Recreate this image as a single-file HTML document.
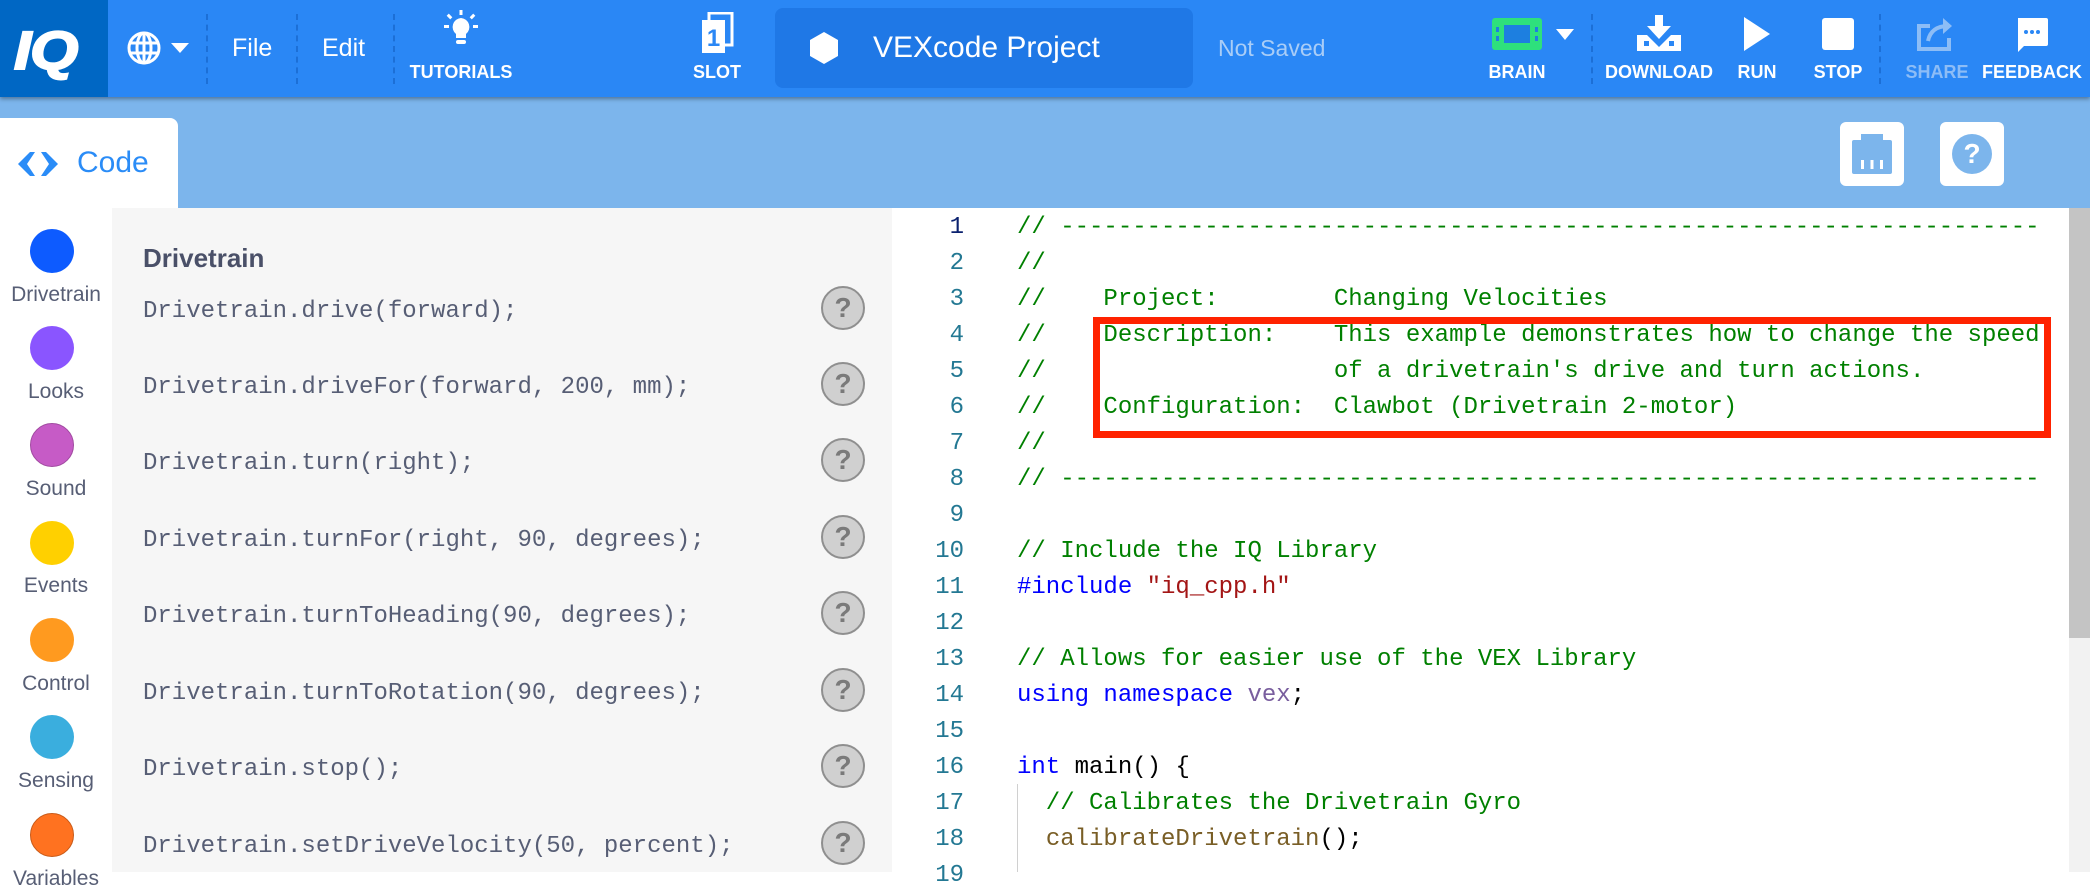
<!DOCTYPE html>
<html><head><meta charset="utf-8"><style>
*{margin:0;padding:0;box-sizing:border-box}
body{width:2090px;height:872px;overflow:hidden;background:#fff;font-family:"Liberation Sans",sans-serif;position:relative}
.a{position:absolute}
.hdr{left:0;top:0;width:2090px;height:97px;background:#2a87f5;box-shadow:0 2px 4px rgba(0,0,0,.35);z-index:2}
.lbl{position:absolute;color:#fff;font-weight:bold;font-size:18px;transform:translateX(-50%);top:62px;white-space:nowrap}
.sep{position:absolute;top:14px;height:70px;border-left:2px dashed #1c6fd6}
.bar2{left:0;top:97px;width:2090px;height:111px;background:#7cb5ec}
.mono{font-family:"Liberation Mono",monospace;font-size:24px;white-space:pre}
.cat{position:absolute;left:30px;width:44px;height:44px;border-radius:50%}
.cl{position:absolute;left:0;width:112px;text-align:center;font-size:21px;color:#575e75}
.pi{position:absolute;left:143px;color:#575e75}
.q{position:absolute;left:821px;width:44px;height:44px;border-radius:50%;background:#d0d0d0;border:2px solid #8f8f8f;color:#7a7a7a;font-weight:bold;font-size:28px;text-align:center;line-height:40px}
.ln{position:absolute;left:900px;width:64px;text-align:right;color:#237893;height:36px;line-height:36px}
.cd{position:absolute;left:1017px;height:36px;line-height:36px}
.c{color:#008000}.k{color:#0000ff}.s{color:#a31515}.p{color:#795e9e}.f{color:#795e26}
</style></head><body>
<div class="a hdr">
 <div class="a" style="left:0;top:0;width:108px;height:97px;background:#0067c4"></div>
 <div class="a" style="left:14px;top:20px;font-size:54px;font-weight:900;font-style:italic;color:#fff;letter-spacing:-1px;font-family:'Liberation Sans',sans-serif;transform:scaleX(1.15);transform-origin:left;-webkit-text-stroke:2px #fff">IQ</div>
 <svg class="a" style="left:126px;top:30px" width="36" height="36" viewBox="0 0 36 36" fill="none" stroke="#fff" stroke-width="3"><circle cx="18" cy="18" r="15"/><ellipse cx="18" cy="18" rx="7" ry="15"/><line x1="3" y1="13" x2="33" y2="13"/><line x1="3" y1="23" x2="33" y2="23"/><line x1="18" y1="3" x2="18" y2="33"/></svg>
 <div class="a" style="left:171px;top:43px;width:0;height:0;border-left:9px solid transparent;border-right:9px solid transparent;border-top:10px solid #fff"></div>
 <div class="sep" style="left:206px"></div><div class="sep" style="left:296px"></div><div class="sep" style="left:393px"></div>
 <div class="a" style="left:232px;top:34px;color:#fff;font-size:25px">File</div>
 <div class="a" style="left:322px;top:34px;color:#fff;font-size:25px">Edit</div>
 <svg class="a" style="left:443px;top:10px" width="36" height="40" viewBox="0 0 36 40" fill="#fff"><path d="M18 8a9 9 0 0 0-5 16v4h10v-4a9 9 0 0 0-5-16z"/><rect x="13" y="30" width="10" height="4" rx="2"/><rect x="16.5" y="0" width="3" height="5"/><rect x="1" y="15" width="5" height="3"/><rect x="30" y="15" width="5" height="3"/><rect x="5" y="4" width="3" height="5" transform="rotate(-45 6.5 6.5)"/><rect x="28" y="4" width="3" height="5" transform="rotate(45 29.5 6.5)"/></svg>
 <div class="lbl" style="left:461px">TUTORIALS</div>
 <svg class="a" style="left:700px;top:12px" width="34" height="42" viewBox="0 0 34 42"><rect x="9" y="1" width="23" height="32" fill="none" stroke="#fff" stroke-width="3"/><rect x="2" y="8" width="23" height="33" fill="#fff"/><text x="13.5" y="34" font-size="24" font-weight="bold" fill="#2a87f5" text-anchor="middle" font-family="Liberation Sans">1</text></svg>
 <div class="lbl" style="left:717px">SLOT</div>
 <div class="a" style="left:775px;top:8px;width:418px;height:80px;background:#1f78e6;border-radius:8px"></div>
 <svg class="a" style="left:810px;top:32px" width="28" height="32" viewBox="0 0 28 32"><path d="M14 0L28 8v16L14 32 0 24V8z" fill="#fff"/></svg>
 <div class="a" style="left:873px;top:31px;color:#fff;font-size:30px">VEXcode Project</div>
 <div class="a" style="left:1218px;top:35px;color:#a9cdf7;font-size:23px">Not Saved</div>
 <svg class="a" style="left:1492px;top:18px" width="50" height="32" viewBox="0 0 50 32"><rect width="50" height="32" rx="3" fill="#2ee07c"/><rect x="12" y="7" width="26" height="18" fill="#1d7fe0"/><rect x="4" y="9" width="3" height="5" fill="#1d7fe0"/><rect x="4" y="18" width="3" height="5" fill="#1d7fe0"/><rect x="43" y="9" width="3" height="5" fill="#1d7fe0"/><rect x="43" y="18" width="3" height="5" fill="#1d7fe0"/></svg>
 <div class="a" style="left:1556px;top:29px;width:0;height:0;border-left:9px solid transparent;border-right:9px solid transparent;border-top:11px solid #fff"></div>
 <div class="lbl" style="left:1517px">BRAIN</div>
 <div class="sep" style="left:1591px"></div>
 <svg class="a" style="left:1637px;top:15px" width="44" height="36" viewBox="0 0 44 36" fill="#fff"><rect x="18" y="0" width="8" height="12"/><path d="M10 11h24L22 24z"/><path d="M0 20h10l12 12 12-12h10v16H0z"/><rect x="7" y="26" width="5" height="5" fill="#2a87f5"/><rect x="32" y="26" width="5" height="5" fill="#2a87f5"/></svg>
 <div class="lbl" style="left:1659px">DOWNLOAD</div>
 <svg class="a" style="left:1744px;top:17px" width="28" height="34" viewBox="0 0 28 34"><path d="M0 0L26 17 0 34z" fill="#fff"/></svg>
 <div class="lbl" style="left:1757px">RUN</div>
 <div class="a" style="left:1822px;top:18px;width:32px;height:32px;background:#fff;border-radius:3px"></div>
 <div class="lbl" style="left:1838px">STOP</div>
 <div class="sep" style="left:1879px"></div>
 <svg class="a" style="left:1916px;top:14px" width="40" height="38" viewBox="0 0 40 38" fill="none" stroke="#8dbdf6" stroke-width="4"><path d="M14 12H3v23h30V24"/><path d="M12 27c2-10 9-15 20-15" /><path d="M27 4l9 8-9 8z" fill="#8dbdf6" stroke="none"/></svg>
 <div class="lbl" style="left:1937px;color:#8dbdf6">SHARE</div>
 <svg class="a" style="left:2016px;top:18px" width="32" height="34" viewBox="0 0 32 34"><path d="M2 0h28a2 2 0 0 1 2 2v24a2 2 0 0 1-2 2H8L2 34z" fill="#fff"/><circle cx="10" cy="14" r="2" fill="#2a87f5"/><circle cx="16" cy="14" r="2" fill="#2a87f5"/><circle cx="22" cy="14" r="2" fill="#2a87f5"/></svg>
 <div class="lbl" style="left:2032px">FEEDBACK</div>
</div>
<div class="a bar2"></div>
<div class="a" style="left:0;top:118px;width:178px;height:100px;background:#fff;border-radius:0 8px 0 0"></div>
<svg class="a" style="left:18px;top:152px" width="40" height="24" viewBox="0 0 40 24" fill="#2a8cf7"><path d="M0 12L12 0h5L9 12l8 12h-5z"/><path d="M40 12L28 0h-5l8 12-8 12h5z"/></svg>
<div class="a" style="left:77px;top:146px;color:#2a8cf7;font-size:30px">Code</div>
<div class="a" style="left:1840px;top:122px;width:64px;height:64px;background:#fff;border-radius:6px"></div>
<svg class="a" style="left:1852px;top:134px" width="40" height="40" viewBox="0 0 40 40" fill="#7cb5ec"><rect x="9" y="0" width="22" height="6"/><rect x="0" y="6" width="40" height="34" rx="2"/><rect x="9" y="26" width="3" height="9" fill="#fff"/><rect x="18.5" y="26" width="3" height="9" fill="#fff"/><rect x="28" y="26" width="3" height="9" fill="#fff"/></svg>
<div class="a" style="left:1940px;top:122px;width:64px;height:64px;background:#fff;border-radius:6px"></div>
<div class="a" style="left:1952px;top:134px;width:40px;height:40px;border-radius:50%;background:#7cb5ec;color:#fff;font-weight:bold;font-size:28px;text-align:center;line-height:40px">?</div>

<div class="a" style="left:112px;top:208px;width:780px;height:664px;background:#f6f6f6"></div>
<div class="a" style="left:2069px;top:208px;width:21px;height:430px;background:#c4c4c4"></div>
<div class="a" style="left:2069px;top:638px;width:21px;height:234px;background:#f2f2f2"></div>

<div class="cat" style="top:229px;background:#0d5bff"></div><div class="cl" style="top:283px">Drivetrain</div>
<div class="cat" style="top:326px;background:#8a55ff"></div><div class="cl" style="top:380px">Looks</div>
<div class="cat" style="top:423px;background:#c65bc6;border:1px solid #a04aa0"></div><div class="cl" style="top:477px">Sound</div>
<div class="cat" style="top:521px;background:#ffd000"></div><div class="cl" style="top:574px">Events</div>
<div class="cat" style="top:618px;background:#ff9a1f"></div><div class="cl" style="top:672px">Control</div>
<div class="cat" style="top:715px;background:#3aaede"></div><div class="cl" style="top:769px">Sensing</div>
<div class="cat" style="top:813px;background:#ff7220;border:1px solid #c85a18"></div><div class="cl" style="top:867px">Variables</div>

<div class="a" style="left:143px;top:243px;font-size:26px;font-weight:bold;color:#4a5068">Drivetrain</div>
<div class="pi mono" style="top:298px">Drivetrain.drive(forward);</div><div class="q" style="top:286px">?</div>
<div class="pi mono" style="top:374px">Drivetrain.driveFor(forward, 200, mm);</div><div class="q" style="top:362px">?</div>
<div class="pi mono" style="top:450px">Drivetrain.turn(right);</div><div class="q" style="top:438px">?</div>
<div class="pi mono" style="top:527px">Drivetrain.turnFor(right, 90, degrees);</div><div class="q" style="top:515px">?</div>
<div class="pi mono" style="top:603px">Drivetrain.turnToHeading(90, degrees);</div><div class="q" style="top:591px">?</div>
<div class="pi mono" style="top:680px">Drivetrain.turnToRotation(90, degrees);</div><div class="q" style="top:668px">?</div>
<div class="pi mono" style="top:756px">Drivetrain.stop();</div><div class="q" style="top:744px">?</div>
<div class="pi mono" style="top:833px">Drivetrain.setDriveVelocity(50, percent);</div><div class="q" style="top:821px">?</div>

<div class="mono">
<div class="ln" style="top:210px;color:#0b216f">1</div><div class="cd c" style="top:210px">// --------------------------------------------------------------------</div>
<div class="ln" style="top:246px">2</div><div class="cd c" style="top:246px">//</div>
<div class="ln" style="top:282px">3</div><div class="cd c" style="top:282px">//    Project:        Changing Velocities</div>
<div class="ln" style="top:318px">4</div><div class="cd c" style="top:318px">//    Description:    This example demonstrates how to change the speed</div>
<div class="ln" style="top:354px">5</div><div class="cd c" style="top:354px">//                    of a drivetrain's drive and turn actions.</div>
<div class="ln" style="top:390px">6</div><div class="cd c" style="top:390px">//    Configuration:  Clawbot (Drivetrain 2-motor)</div>
<div class="ln" style="top:426px">7</div><div class="cd c" style="top:426px">//</div>
<div class="ln" style="top:462px">8</div><div class="cd c" style="top:462px">// --------------------------------------------------------------------</div>
<div class="ln" style="top:498px">9</div>
<div class="ln" style="top:534px">10</div><div class="cd c" style="top:534px">// Include the IQ Library</div>
<div class="ln" style="top:570px">11</div><div class="cd" style="top:570px"><span class="k">#include</span> <span class="s">"iq_cpp.h"</span></div>
<div class="ln" style="top:606px">12</div>
<div class="ln" style="top:642px">13</div><div class="cd c" style="top:642px">// Allows for easier use of the VEX Library</div>
<div class="ln" style="top:678px">14</div><div class="cd" style="top:678px"><span class="k">using namespace</span> <span class="p">vex</span>;</div>
<div class="ln" style="top:714px">15</div>
<div class="ln" style="top:750px">16</div><div class="cd" style="top:750px"><span class="k">int</span> main() {</div>
<div class="ln" style="top:786px">17</div><div class="cd c" style="top:786px">  // Calibrates the Drivetrain Gyro</div>
<div class="ln" style="top:822px">18</div><div class="cd" style="top:822px">  <span class="f">calibrateDrivetrain</span>();</div>
<div class="ln" style="top:858px">19</div>
</div>
<div class="a" style="left:1017px;top:784px;width:1px;height:88px;background:#d0d0d0"></div>
<div class="a" style="left:1093px;top:317px;width:958px;height:121px;border:7px solid #ff2200"></div>
</body></html>
